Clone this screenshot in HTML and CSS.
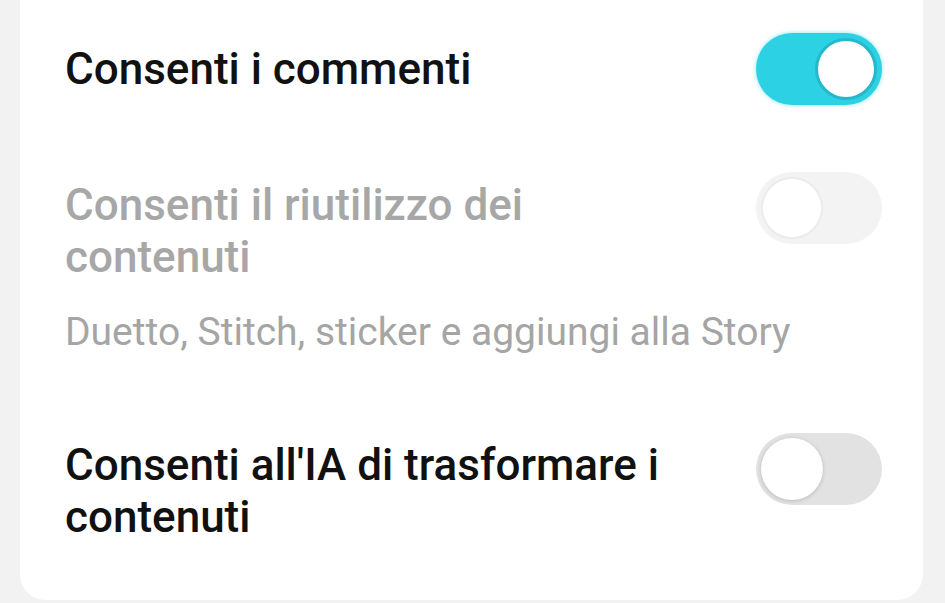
FILE: index.html
```html
<!DOCTYPE html>
<html lang="it">
<head>
<meta charset="utf-8">
<title>Impostazioni</title>
<link rel="stylesheet" href="styles.css">
</head>
<body>
<div class="card">
  <div class="row row-first">
    <div class="label">Consenti i commenti</div>
    <div class="toggle toggle-on"><span class="knob"></span></div>
  </div>
  <div class="row row-second">
    <div class="text-block">
      <div class="label label-disabled">Consenti il riutilizzo dei contenuti</div>
      <div class="sub">Duetto, Stitch, sticker e aggiungi alla Story</div>
    </div>
    <div class="toggle toggle-disabled"><span class="knob"></span></div>
  </div>
  <div class="row row-third">
    <div class="label">Consenti all'IA di trasformare i contenuti</div>
    <div class="toggle toggle-off"><span class="knob"></span></div>
  </div>
</div>
</body>
</html>
```

FILE: styles.css
```css
html, body {
  margin: 0;
  padding: 0;
}
body {
  background: #f2f2f2;
  width: 945px;
  height: 603px;
  overflow: hidden;
  font-family: Roboto, "Liberation Sans", sans-serif;
}
.card {
  margin-left: 20px;
  width: 903px;
  height: 600px;
  box-sizing: border-box;
  background: #ffffff;
  border-radius: 0 0 26px 26px;
  padding: 33px 41px 0 45px;
  display: flex;
  flex-direction: column;
}
.row {
  display: flex;
  justify-content: space-between;
}
.row-first {
  align-items: center;
}
.row-second {
  margin-top: 67px;
  align-items: flex-start;
}
.row-third {
  margin-top: 79px;
  align-items: flex-start;
}
.text-block {
  flex: 1;
  min-width: 0;
  display: flex;
  flex-direction: column;
}
.label {
  font-size: 44px;
  line-height: 52px;
  font-weight: 500;
  color: #111111;
  max-width: 680px;
}
.row-second .label {
  margin-top: 7px;
}
.row-third .label {
  margin-top: 6px;
}
.label-disabled {
  color: #a7a7a7;
  max-width: 560px;
}
.sub {
  margin-top: 27px;
  font-size: 39px;
  line-height: 44px;
  color: #a5a5a5;
  white-space: nowrap;
}
.toggle {
  position: relative;
  flex: none;
  width: 126px;
  height: 72px;
  border-radius: 36px;
  box-sizing: border-box;
}
.knob {
  position: absolute;
  top: 5px;
  width: 62px;
  height: 62px;
  border-radius: 50%;
  background: #ffffff;
  box-sizing: border-box;
}
.toggle-on {
  background: #2cd2e4;
  box-shadow: 0 0 4px rgba(44, 210, 228, 0.6);
}
.toggle-on .knob {
  right: 5px;
  border: 3px solid #27b7cb;
}
.toggle-disabled {
  background: #f3f3f3;
}
.toggle-disabled .knob {
  left: 5px;
  border: 2px solid #ebebeb;
}
.toggle-off {
  background: #e2e2e2;
}
.toggle-off .knob {
  left: 5px;
  box-shadow: 0 1px 4px rgba(0, 0, 0, 0.18);
}
```
